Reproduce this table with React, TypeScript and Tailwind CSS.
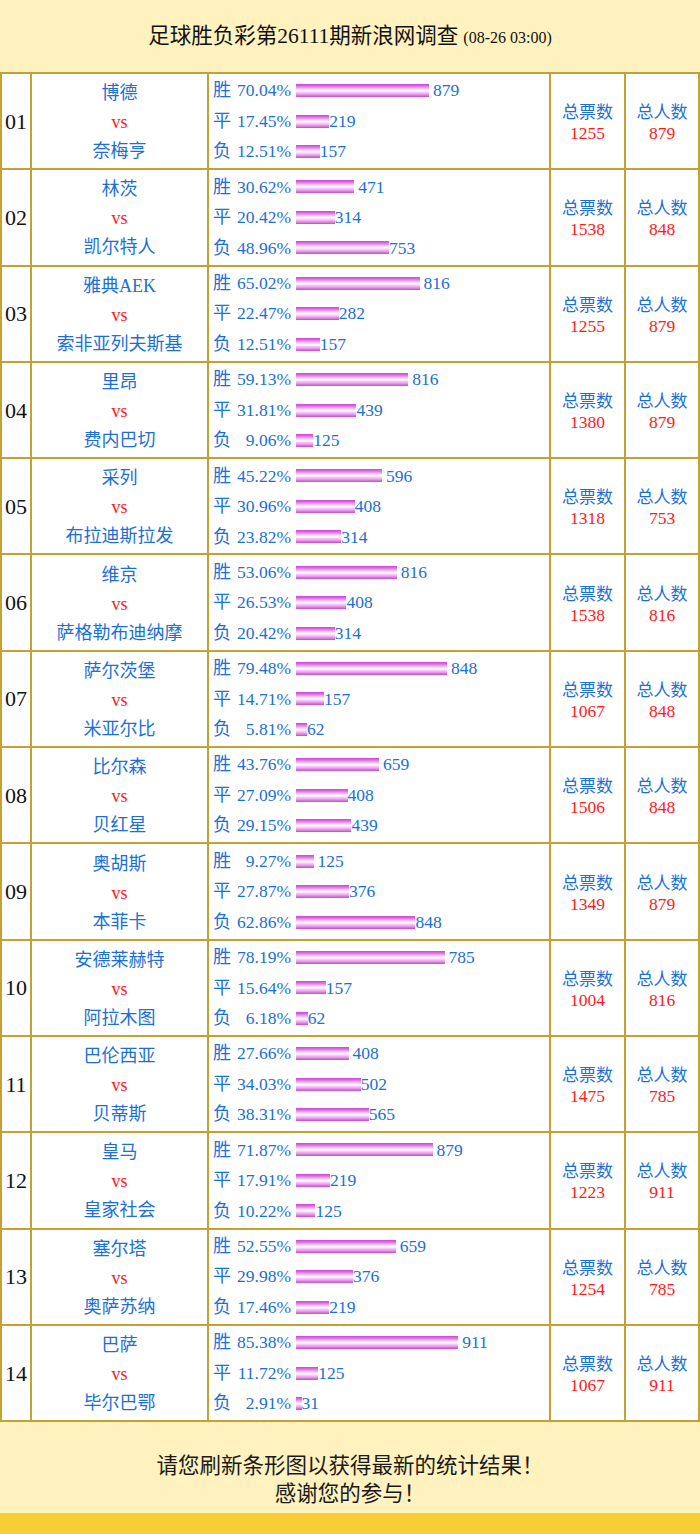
import React from "react";

type Row = {
  no: string;
  home: string;
  away: string;
  res: [string, number, number][];
  votes: number;
  people: number;
};

const rows: Row[] = [
  { no: "01", home: "博德", away: "奈梅亨", res: [["胜", 70.04, 879], ["平", 17.45, 219], ["负", 12.51, 157]], votes: 1255, people: 879 },
  { no: "02", home: "林茨", away: "凯尔特人", res: [["胜", 30.62, 471], ["平", 20.42, 314], ["负", 48.96, 753]], votes: 1538, people: 848 },
  { no: "03", home: "雅典AEK", away: "索非亚列夫斯基", res: [["胜", 65.02, 816], ["平", 22.47, 282], ["负", 12.51, 157]], votes: 1255, people: 879 },
  { no: "04", home: "里昂", away: "费内巴切", res: [["胜", 59.13, 816], ["平", 31.81, 439], ["负", 9.06, 125]], votes: 1380, people: 879 },
  { no: "05", home: "采列", away: "布拉迪斯拉发", res: [["胜", 45.22, 596], ["平", 30.96, 408], ["负", 23.82, 314]], votes: 1318, people: 753 },
  { no: "06", home: "维京", away: "萨格勒布迪纳摩", res: [["胜", 53.06, 816], ["平", 26.53, 408], ["负", 20.42, 314]], votes: 1538, people: 816 },
  { no: "07", home: "萨尔茨堡", away: "米亚尔比", res: [["胜", 79.48, 848], ["平", 14.71, 157], ["负", 5.81, 62]], votes: 1067, people: 848 },
  { no: "08", home: "比尔森", away: "贝红星", res: [["胜", 43.76, 659], ["平", 27.09, 408], ["负", 29.15, 439]], votes: 1506, people: 848 },
  { no: "09", home: "奥胡斯", away: "本菲卡", res: [["胜", 9.27, 125], ["平", 27.87, 376], ["负", 62.86, 848]], votes: 1349, people: 879 },
  { no: "10", home: "安德莱赫特", away: "阿拉木图", res: [["胜", 78.19, 785], ["平", 15.64, 157], ["负", 6.18, 62]], votes: 1004, people: 816 },
  { no: "11", home: "巴伦西亚", away: "贝蒂斯", res: [["胜", 27.66, 408], ["平", 34.03, 502], ["负", 38.31, 565]], votes: 1475, people: 785 },
  { no: "12", home: "皇马", away: "皇家社会", res: [["胜", 71.87, 879], ["平", 17.91, 219], ["负", 10.22, 125]], votes: 1223, people: 911 },
  { no: "13", home: "塞尔塔", away: "奥萨苏纳", res: [["胜", 52.55, 659], ["平", 29.98, 376], ["负", 17.46, 219]], votes: 1254, people: 785 },
  { no: "14", home: "巴萨", away: "毕尔巴鄂", res: [["胜", 85.38, 911], ["平", 11.72, 125], ["负", 2.91, 31]], votes: 1067, people: 911 },
];

const cell = "border-r-2 border-b-2 border-[#c3a233]";

export default function App() {
  return (
    <div className="w-[700px] bg-white font-['Liberation_Serif','Noto_Sans_CJK_SC',serif]">
      <div className="h-[72px] bg-[#fff2bf] flex items-center justify-center text-[#111]">
        <span className="text-[21.5px]">足球胜负彩第26111期新浪网调查</span>
        <span className="text-[16px] ml-[5px] mt-[3px]">(08-26 03:00)</span>
      </div>
      <div className="border-l-2 border-t-2 border-[#c3a233]">
        {rows.map((r) => (
          <div key={r.no} className="flex h-[96.3px]">
            <div className={`${cell} w-[30px] flex items-center justify-center text-[22px] text-[#111]`}>{r.no}</div>
            <div className={`${cell} w-[177px] flex flex-col items-center justify-center pt-[3px] leading-[29px] text-[18px] text-[#1b6fd6]`}>
              <div>{r.home}</div>
              <div className="text-[#ff1a1a] text-[18px]">vs</div>
              <div>{r.away}</div>
            </div>
            <div className={`${cell} w-[342px] flex flex-col justify-center pl-[4px] leading-[30.5px] text-[#1b6fd6]`}>
              {r.res.map(([label, pct, n], i) => (
                <div key={label} className="flex items-center">
                  <span className="text-[18px] w-[18px]">{label}</span>
                  <span className="w-[60px] text-right text-[17.5px]">{pct.toFixed(2)}%</span>
                  <span
                    className="ml-[5px] h-[13px] bg-[linear-gradient(to_bottom,#cc44d2_0%,#dc6de2_15%,#eeb0f0_32%,#fce8fc_45%,#ffffff_52%,#f7d6f8_62%,#e8a0ec_78%,#cc44d2_100%)]"
                    style={{ width: `${(pct * 1.9).toFixed(1)}px` }}
                  />
                  <span className={`text-[17.5px] ${i === 0 ? "ml-[4px]" : ""}`}>{n}</span>
                </div>
              ))}
            </div>
            <div className={`${cell} w-[75px] flex flex-col items-center justify-center pt-[4px] leading-[21px]`}>
              <div className="text-[17px] text-[#1b6fd6]">总票数</div>
              <div className="text-[17.5px] text-[#ff1a1a]">{r.votes}</div>
            </div>
            <div className={`${cell} w-[74px] flex flex-col items-center justify-center pt-[4px] leading-[21px]`}>
              <div className="text-[17px] text-[#1b6fd6]">总人数</div>
              <div className="text-[17.5px] text-[#ff1a1a]">{r.people}</div>
            </div>
          </div>
        ))}
      </div>
      <div className="h-[91px] bg-[#fff2bf] pt-[28px] flex flex-col items-center leading-[28px] text-[21.5px] text-[#1a1a1a] font-['Noto_Sans_CJK_SC',sans-serif]">
        <div>请您刷新条形图以获得最新的统计结果！</div>
        <div>感谢您的参与！</div>
      </div>
      <div className="h-[22px] bg-[#f8ce36]" />
    </div>
  );
}
